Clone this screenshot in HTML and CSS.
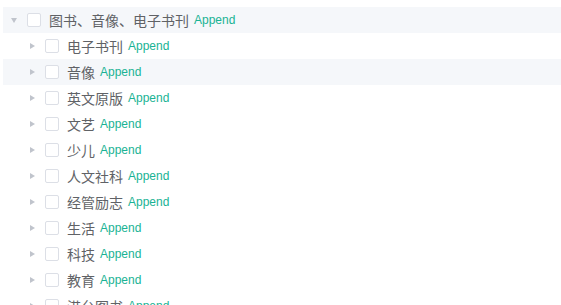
FILE: index.html
```html
<!doctype html>
<html lang="zh-CN">
  <head>
    <meta charset="UTF-8" />
    <meta name="viewport" content="width=device-width, initial-scale=1.0" />
    <title>Tree</title>
    <link rel="stylesheet" href="styles.css">
  </head>
  <body>
    <div class="tree">
      <div class="node is-current">
        <span class="caret expanded"></span>
        <span class="checkbox"></span>
        <span class="label">图书、音像、电子书刊</span>
        <span class="append">Append</span>
      </div>
      <div class="children">
        <div class="node">
          <span class="caret"></span>
          <span class="checkbox"></span>
          <span class="label">电子书刊</span>
          <span class="append">Append</span>
        </div>
        <div class="node is-current">
          <span class="caret"></span>
          <span class="checkbox"></span>
          <span class="label">音像</span>
          <span class="append">Append</span>
        </div>
        <div class="node">
          <span class="caret"></span>
          <span class="checkbox"></span>
          <span class="label">英文原版</span>
          <span class="append">Append</span>
        </div>
        <div class="node">
          <span class="caret"></span>
          <span class="checkbox"></span>
          <span class="label">文艺</span>
          <span class="append">Append</span>
        </div>
        <div class="node">
          <span class="caret"></span>
          <span class="checkbox"></span>
          <span class="label">少儿</span>
          <span class="append">Append</span>
        </div>
        <div class="node">
          <span class="caret"></span>
          <span class="checkbox"></span>
          <span class="label">人文社科</span>
          <span class="append">Append</span>
        </div>
        <div class="node">
          <span class="caret"></span>
          <span class="checkbox"></span>
          <span class="label">经管励志</span>
          <span class="append">Append</span>
        </div>
        <div class="node">
          <span class="caret"></span>
          <span class="checkbox"></span>
          <span class="label">生活</span>
          <span class="append">Append</span>
        </div>
        <div class="node">
          <span class="caret"></span>
          <span class="checkbox"></span>
          <span class="label">科技</span>
          <span class="append">Append</span>
        </div>
        <div class="node">
          <span class="caret"></span>
          <span class="checkbox"></span>
          <span class="label">教育</span>
          <span class="append">Append</span>
        </div>
        <div class="node">
          <span class="caret"></span>
          <span class="checkbox"></span>
          <span class="label">港台图书</span>
          <span class="append">Append</span>
        </div>
      </div>
    </div>
  </body>
</html>
```

FILE: styles.css
```css
body {
  margin: 0;
  font-family: "Liberation Sans", "Noto Sans CJK SC", sans-serif;
  color: #606266;
  background: #fff;
  overflow: hidden;
}
.tree {
  padding: 7px 0 0 3px;
}
.node {
  display: flex;
  align-items: center;
  height: 26px;
  font-size: 14px;
}
.node.is-current {
  background: #f5f7fa;
}
.children .node {
  padding-left: 18px;
}
.caret {
  width: 22px;
  height: 26px;
  display: flex;
  align-items: center;
  justify-content: center;
  flex-shrink: 0;
}
.caret::before {
  content: "";
  display: block;
  width: 0;
  height: 0;
  border-left: 5px solid #c0c4cc;
  border-top: 3.5px solid transparent;
  border-bottom: 3.5px solid transparent;
}
.caret.expanded::before {
  border-left: 3.5px solid transparent;
  border-right: 3.5px solid transparent;
  border-top: 5px solid #c0c4cc;
  border-bottom: 0;
}
.checkbox {
  width: 14px;
  height: 14px;
  box-sizing: border-box;
  border: 1px solid #dcdfe6;
  border-radius: 2px;
  background: #fff;
  margin: 0 8px 0 2px;
  flex-shrink: 0;
}
.label {
  white-space: nowrap;
}
.append {
  margin-left: 5px;
  font-size: 12px;
  color: #1ab394;
}
```
